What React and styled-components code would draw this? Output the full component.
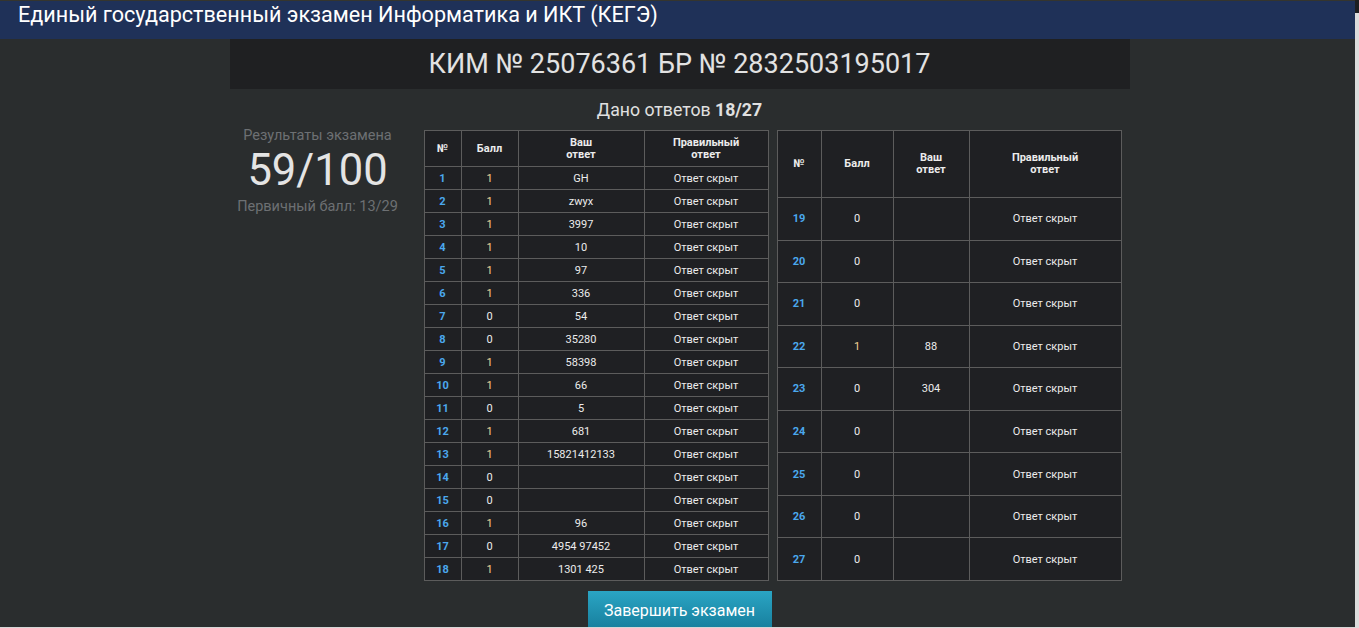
import React from "react";
import styled, { createGlobalStyle } from "styled-components";

const Global = createGlobalStyle`
  html, body { margin: 0; padding: 0; background: #2a2d2e; }
  body { font-family: Roboto, "Noto Sans", Arial, sans-serif; overflow: hidden; }
  * { box-sizing: border-box; }
`;

const Screen = styled.div`
  position: relative;
  width: 1359px;
  height: 628px;
  overflow: hidden;
`;

const Main = styled.div`
  display: flex;
  flex-direction: column;
  background: #2a2d2e;
  border-bottom: 1px solid #d6d6d6;
  height: 628px;
  overflow: hidden;
  & > * { flex-shrink: 0; }
`;

const ScrollTrack = styled.div`
  position: absolute;
  top: 0;
  right: 0;
  bottom: 0;
  width: 4px;
  background: #dcdcdc;
  border-top: 13px solid #1e1f21;
`;

const Header = styled.header`
  height: 39px;
  background: #1f3158;
  border-top: 1px solid #35352e;
  padding: 0 18px;
  color: #ffffff;
  font-size: 21.6px;
  line-height: 28px;
`;

const Container = styled.div`
  width: 900px;
  margin: 0 auto;
  display: flex;
  flex-direction: column;
  align-items: center;
  & > * { flex-shrink: 0; }
`;

const TitlePanel = styled.div`
  width: 100%;
  height: 50px;
  background: #1f2022;
  color: #e2e2e2;
  font-size: 27px;
  display: flex;
  align-items: center;
  justify-content: center;
`;

const Answered = styled.div`
  margin-top: 11px;
  height: 20px;
  color: #e0e0e0;
  font-size: 17.7px;
  line-height: 20px;
  b { font-weight: 700; }
`;

const Body = styled.div`
  width: 100%;
  display: flex;
  align-items: stretch;
  margin-top: 10px;
`;

const Results = styled.div`
  width: 176px;
  margin-right: 18px;
  display: flex;
  flex-direction: column;
  align-items: center;
  color: #6d7073;
  font-size: 14.5px;
`;

const ResultsLabel = styled.div`
  line-height: 16px;
  margin-top: -2px;
`;

const Score = styled.div`
  font-size: 43.5px;
  line-height: 55px;
  color: #e4e4e4;
  font-weight: 400;
  margin-top: -1px;
`;

const Primary = styled.div`
  line-height: 16px;
  margin-top: 1px;
`;

const Tables = styled.div`
  display: flex;
  gap: 8px;
  align-items: stretch;
`;

const Table = styled.table`
  border-collapse: collapse;
  width: 344px;
  background: #1f2023;
  color: #ececec;
  font-size: 11px;
  table-layout: fixed;
  td, th {
    border: 1px solid #5c5c5c;
    text-align: center;
    padding: 0 4px;
  }
  th { font-weight: 700; line-height: 12px; }
`;

const HeadRow = styled.tr`
  height: ${(p) => p.$h}px;
`;

const Row = styled.tr`
  height: ${(p) => p.$h}px;
`;

const Num = styled.td`
  color: #4ba8ee;
  font-weight: 700;
`;

const Points = styled.td`
  color: ${(p) => (p.$ok ? "#f2d394" : "#ececec")};
`;

const Button = styled.button`
  margin-top: 10px;
  width: 184px;
  height: 40px;
  border: none;
  background: linear-gradient(#2aa5c4, #167d9b);
  color: #ffffff;
  font-family: Roboto, Arial, sans-serif;
  font-size: 16px;
  padding-bottom: 2px;
`;

const left = [
  [1, 1, "GH"], [2, 1, "zwyx"], [3, 1, "3997"], [4, 1, "10"], [5, 1, "97"],
  [6, 1, "336"], [7, 0, "54"], [8, 0, "35280"], [9, 1, "58398"], [10, 1, "66"],
  [11, 0, "5"], [12, 1, "681"], [13, 1, "15821412133"], [14, 0, ""], [15, 0, ""],
  [16, 1, "96"], [17, 0, "4954 97452"], [18, 1, "1301 425"],
];
const right = [
  [19, 0, ""], [20, 0, ""], [21, 0, ""], [22, 1, "88"], [23, 0, "304"],
  [24, 0, ""], [25, 0, ""], [26, 0, ""], [27, 0, ""],
];

function ResultTable({ rows, cols, headH, rowH }) {
  return (
    <Table>
      <colgroup>
        {cols.map((w, i) => <col key={i} style={{ width: w }} />)}
      </colgroup>
      <thead>
        <HeadRow $h={headH}>
          <th>№</th>
          <th>Балл</th>
          <th>Ваш<br />ответ</th>
          <th>Правильный<br />ответ</th>
        </HeadRow>
      </thead>
      <tbody>
        {rows.map(([n, p, a]) => (
          <Row key={n} $h={rowH}>
            <Num>{n}</Num>
            <Points $ok={p === 1}>{p}</Points>
            <td>{a}</td>
            <td>Ответ скрыт</td>
          </Row>
        ))}
      </tbody>
    </Table>
  );
}

export default function App() {
  return (
    <Screen>
      <Global />
      <Main>
        <Header>Единый государственный экзамен Информатика и ИКТ (КЕГЭ)</Header>
        <Container>
          <TitlePanel>КИМ № 25076361 БР № 2832503195017</TitlePanel>
          <Answered>Дано ответов <b>18/27</b></Answered>
          <Body>
            <Results>
              <ResultsLabel>Результаты экзамена</ResultsLabel>
              <Score>59/100</Score>
              <Primary>Первичный балл: 13/29</Primary>
            </Results>
            <Tables>
              <ResultTable rows={left} cols={[37, 57, 126, 124]} headH={36} rowH={23} />
              <ResultTable rows={right} cols={[44, 72, 76, 152]} headH={67} rowH={42.5} />
            </Tables>
          </Body>
          <Button>Завершить экзамен</Button>
        </Container>
      </Main>
      <ScrollTrack />
    </Screen>
  );
}
